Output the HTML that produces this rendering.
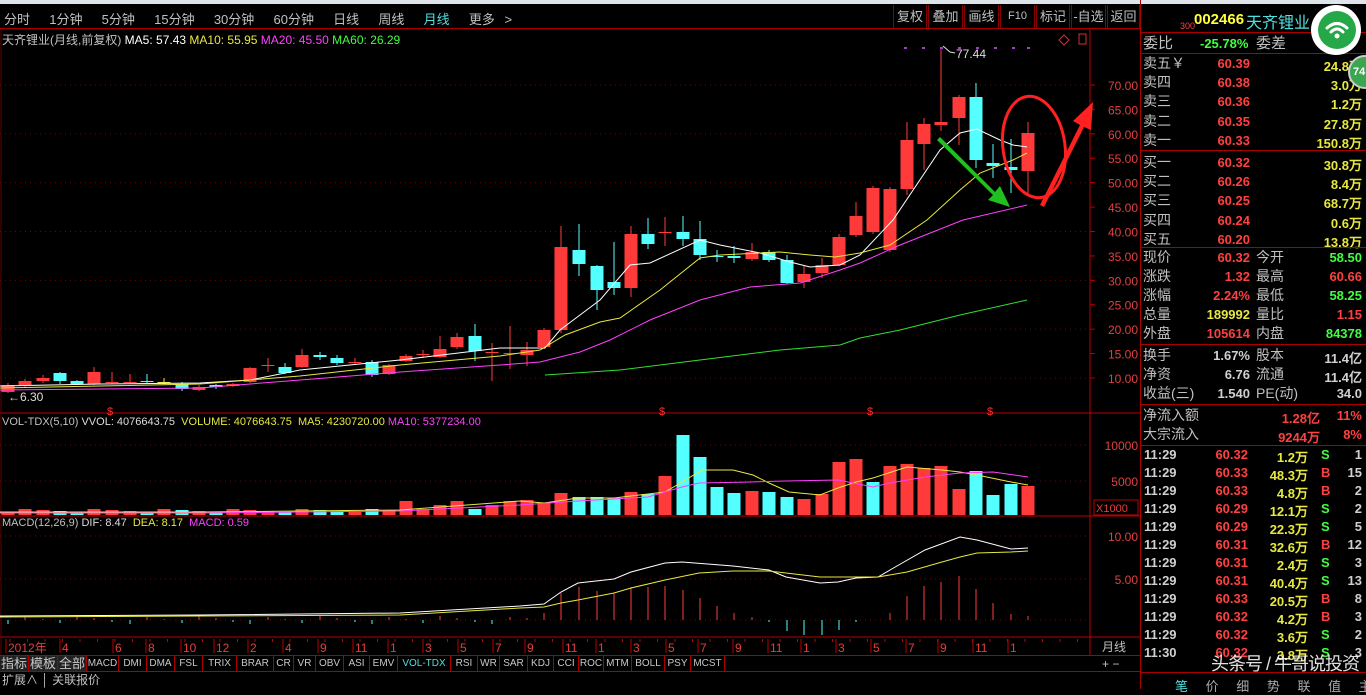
<!DOCTYPE html>
<html><head><meta charset="utf-8"><style>
*{margin:0;padding:0;box-sizing:border-box}
body{width:1366px;height:689px;background:#000;overflow:hidden;position:relative;font-family:"Liberation Sans","Noto Sans CJK SC",sans-serif;color:#c0c0c0}
.a{position:absolute;white-space:nowrap}
.t{font-size:13px}
.rp{font-size:14px;line-height:19px}
.r{color:#ff4040}.g{color:#40ff40}.y{color:#e8e840}.c{color:#50e0e0}.w{color:#d0d0d0}.m{color:#ff40ff}
.tab{position:absolute;top:5px;height:23px;border-left:1px solid #800;border-right:1px solid #800;font-size:13px;color:#c0c0c0;text-align:center;line-height:23px}
.num{font-family:"Liberation Sans",sans-serif;font-weight:bold;font-size:13px}
</style></head><body>
<div class="a" style="left:0;top:0;width:1366px;height:4px;background:#dfe3ea"></div>
<div class="a t" style="left:4px;top:9px;font-size:13px;word-spacing:6px">分时 &nbsp;1分钟 &nbsp;5分钟 &nbsp;15分钟 &nbsp;30分钟 &nbsp;60分钟 &nbsp;日线 &nbsp;周线 &nbsp;<span class="c">月线</span> &nbsp;更多 &gt;</div>
<div class="tab" style="left:893px;width:34px">复权</div>
<div class="tab" style="left:928px;width:35px">叠加</div>
<div class="tab" style="left:964px;width:35px">画线</div>
<div class="tab" style="left:1000px;width:35px;font-size:11px">F10</div>
<div class="tab" style="left:1036px;width:34px">标记</div>
<div class="tab" style="left:1071px;width:35px">-自选</div>
<div class="tab" style="left:1107px;width:33px">返回</div>
<div class="a" style="left:0;top:28px;width:1140px;height:1px;background:#a00"></div>
<div class="a t" style="left:2px;top:31px;font-size:12px">天齐锂业(月线,前复权) <span style="color:#fff">MA5: 57.43</span> <span class="y">MA10: 55.95</span> <span class="m">MA20: 45.50</span> <span class="g">MA60: 26.29</span></div>

<svg class="a" style="left:0;top:0" width="1140" height="689" id="ch"></svg>

<div class="a" style="left:2px;top:416px;font-size:11px">VOL-TDX(5,10) <span style="color:#ddd">VVOL: 4076643.75</span> &nbsp;<span class="y">VOLUME: 4076643.75 &nbsp;MA5: 4230720.00</span> <span class="m">MA10: 5377234.00</span></div>
<div class="a" style="left:2px;top:517px;font-size:11px">MACD(12,26,9) <span style="color:#ddd">DIF: 8.47</span> &nbsp;<span class="y">DEA: 8.17</span> &nbsp;<span class="m">MACD: 0.59</span></div>

<div class="a" style="left:1140px;top:0;width:226px;height:689px;border-left:1px solid #a00"></div>
<div class="a" style="left:1180px;top:21px;font-size:9px;color:#f44">300</div>
<div class="a num" style="left:1194px;top:11px;font-size:15px;color:#ffff40">002466</div>
<div class="a c" style="left:1246px;top:9px;font-size:16px">天齐锂业</div>
<div class="a" style="left:1141px;top:32px;width:225px;height:1px;background:#a00"></div>
<div class="a rp" style="left:1143px;top:34px;font-size:15px">委比</div>
<div class="a num g" style="left:1200px;top:36px">-25.78%</div>
<div class="a rp" style="left:1256px;top:34px;font-size:15px">委差</div>
<div class="a" style="left:1141px;top:53px;width:225px;height:1px;background:#a00"></div>
<div id="book"></div>
<div class="a" style="left:1141px;top:150px;width:225px;height:1px;background:#a00"></div>
<div class="a" style="left:1141px;top:247px;width:225px;height:1px;background:#a00"></div>
<div class="a" style="left:1141px;top:344px;width:225px;height:1px;background:#a00"></div>
<div class="a" style="left:1141px;top:404px;width:225px;height:1px;background:#a00"></div>
<div class="a" style="left:1141px;top:445px;width:225px;height:1px;background:#a00"></div>
<div class="a" style="left:1141px;top:672px;width:225px;height:1px;background:#a00"></div>
<div class="a" style="left:1175px;top:676px;width:191px;font-size:13px;color:#aaa;word-spacing:14px"><span class="c">笔</span> 价 细 势 联 值 主 筹</div>

<div class="a" style="left:1311px;top:5px;width:50px;height:50px;border-radius:25px;background:#fff"></div>
<div class="a" style="left:1318px;top:11px;width:38px;height:38px;border-radius:19px;background:#25a848"></div>
<svg class="a" style="left:1318px;top:11px" width="38" height="38"><g fill="none" stroke="#fff" stroke-width="3" stroke-linecap="round"><path d="M9 17 Q19 8 29 17"/><path d="M13 21 Q19 15 25 21"/></g><circle cx="19" cy="25" r="2.5" fill="#fff"/></svg>
<div class="a" style="left:1348px;top:55px;width:34px;height:34px;border-radius:17px;background:#3aa650;border:2px solid #ccc;color:#fff;font-size:11px;font-weight:bold;line-height:30px;padding-left:3px">74</div>
<div class="a" style="left:1211px;top:650px;font-size:18px;letter-spacing:-1px;color:rgba(255,255,255,0.88)">头条号 / 牛哥说投资</div>

<div class="a" style="left:0;top:655px;width:1140px;height:1px;background:#a00"></div>
<div class="a" style="left:0;top:671px;width:1140px;height:1px;background:#a00"></div>
<div class="a" style="left:2px;top:672px;font-size:12px;line-height:17px">扩展∧ │ 关联报价</div>
<div id="itabs"></div>
<div class="a" style="left:1102px;top:657px;font-size:12px">+ −</div>
<div class="a" style="left:1102px;top:638px;font-size:12px">月线</div>

<script>
var s='';
function L(x1,y1,x2,y2,c,w,d){s+='<line x1="'+x1+'" y1="'+y1+'" x2="'+x2+'" y2="'+y2+'" stroke="'+c+'" stroke-width="'+(w||1)+'"'+(d?' stroke-dasharray="'+d+'"':'')+'/>';}
function R(x,y,w,h,c){s+='<rect x="'+x+'" y="'+y+'" width="'+w+'" height="'+Math.max(h,1)+'" fill="'+c+'"/>';}
function T(x,y,t,c,sz,a){s+='<text x="'+x+'" y="'+y+'" fill="'+c+'" font-size="'+(sz||12)+'" font-family="Liberation Sans,sans-serif"'+(a?' text-anchor="'+a+'"':'')+'>'+t+'</text>';}
function P(pts,c,w){s+='<polyline fill="none" stroke="'+c+'" stroke-width="'+(w||1)+'" points="'+pts+'"/>';}
L(1090,29,1090,655,'#b00');L(0,413,1140,413,'#b00');L(0,516,1140,516,'#b00');L(0,637,1140,637,'#b00');
L(1,29,1,655,'#600');
for(var p=10;p<=70;p+=10){var y=85+(70-p)*4.883;L(0,y,1088,y,'#700',1,'1 4');}
for(var p=10;p<=70;p+=5){var y=85+(70-p)*4.883;T(1138,y+5,p.toFixed(2),'#e04040',12,'end');L(1090,y,1095,y,'#b00');}
L(0,445,1088,445,'#700',1,'1 4');L(0,481,1088,481,'#700',1,'1 4');
T(1138,450,'10000','#e04040',12,'end');T(1138,486,'5000','#e04040',12,'end');
s+='<rect x="1094" y="500" width="44" height="15" fill="none" stroke="#b00"/>';T(1096,512,'X1000','#e04040',11);
L(0,536,1088,536,'#700',1,'1 4');L(0,579,1088,579,'#700',1,'1 4');L(0,620,1088,620,'#700',1,'1 4');
T(1138,541,'10.00','#e04040',12,'end');T(1138,584,'5.00','#e04040',12,'end');
var C=[[8,385,392,383,393,'r'],[25,381,385,379,387,'r'],[43,378,381,375,383,'r'],[60,373,381,372,384,'c'],[77,381,384,380,385,'c'],[94,372,384,367,385,'r'],[112,382,383,372,384,'r'],[130,382,383,374,384,'r'],[147,381,382,374,383,'c'],[164,382,383,378,384,'y'],[182,384,389,382,391,'c'],[199,387,390,385,391,'r'],[216,385,387,384,389,'c'],[233,384,386,383,387,'r'],[250,368,382,367,383,'r'],[268,365,366,358,372,'r'],[285,367,373,363,374,'c'],[302,355,367,349,368,'r'],[320,355,357,352,360,'c'],[337,358,363,355,365,'c'],[355,362,363,358,364,'r'],[372,362,375,360,377,'c'],[389,365,374,364,375,'r'],[406,356,361,354,362,'r'],[423,354,355,350,358,'r'],[440,349,357,336,358,'r'],[457,337,347,333,349,'r'],[475,336,351,324,361,'c'],[492,352,353,343,381,'r'],[510,353,354,326,369,'r'],[527,350,355,342,366,'r'],[544,330,347,328,349,'r'],[561,247,330,226,333,'r'],[579,250,264,224,276,'c'],[597,266,290,265,310,'c'],[614,282,288,242,295,'c'],[631,234,288,226,297,'r'],[648,234,244,218,249,'c'],[665,232,233,217,246,'r'],[683,232,239,216,246,'c'],[700,239,255,221,260,'c'],[717,256,257,250,262,'c'],[734,256,258,246,263,'c'],[752,252,259,243,261,'r'],[769,252,260,250,262,'c'],[787,260,283,255,284,'c'],[804,274,282,266,288,'r'],[822,265,273,258,278,'r'],[839,237,265,234,266,'r'],[856,216,235,202,237,'r'],[873,188,232,186,234,'r'],[890,189,250,187,252,'r'],[907,140,189,122,195,'r'],[924,124,144,118,170,'r'],[941,122,125,48,131,'r'],[959,97,118,95,145,'r'],[976,97,160,83,168,'c'],[993,163,166,144,178,'c'],[1011,167,170,139,193,'c'],[1028,133,171,122,195,'r']];
var col={r:'#ff3a3a',c:'#54ffff',y:'#e8e840'};
C.forEach(function(k){var c=col[k[5]];L(k[0],k[3],k[0],k[4],c);R(k[0]-6.5,k[1],13,k[2]-k[1],c);});
P('0,386 100,384 200,383 250,380 300,370 400,360 500,348 545,348 560,330 600,300 630,265 650,263 700,240 720,245 760,253 790,262 810,267 840,265 860,255 893,220 940,150 960,133 977,129 1000,140 1013,145 1027,147','#fff');
P('0,388 100,386 200,384 300,376 400,365 500,356 540,350 565,335 600,322 620,318 660,290 700,258 720,255 780,252 810,255 835,257 860,253 890,245 927,220 960,190 980,173 1013,160 1027,153','#e8e840');
P('0,390 100,389 200,388 300,380 400,372 500,365 540,362 580,352 610,340 650,320 700,300 750,287 800,283 840,270 860,263 900,245 963,220 1027,205','#ff40ff');
P('545,375 620,370 700,360 780,350 840,345 860,338 900,330 960,315 1027,300','#30e030');
[905,923,941,959,977,995,1013,1028].forEach(function(x){R(x-1,47,3,2,'#a040c0');});
P('943,46 950,52 955,53','#ddd');T(956,58,'77.44','#ddd',12);
T(8,401,'←6.30','#ddd',12);
[110,662,870,990].forEach(function(x){T(x,415,'$','#ff3030',11,'middle');});
s+='<path d="M1064 35 l5 5 -5 5 -5 -5z" fill="none" stroke="#d03030"/><rect x="1079" y="34" width="7" height="10" fill="none" stroke="#d03030"/>';
var V=[];C.forEach(function(k,i){var h;if(k[0]<400)h=3+((i*7)%4);else if(k[0]<520)h=6+(i%3)*4;else h=null;V.push([k[0],h,k[5]]);});
var VT={527:500,544:503,561:493,579:497,597:497,614:498,631:492,648:494,665:476,683:435,700:457,717:487,734:493,752:491,769:492,787:497,804:499,822:494,839:462,856:459,873:482,890:466,907:464,924:468,941:466,959:489,976:471,993:495,1011:484,1028:486};
var VC={873:'c',717:'c',734:'c',752:'r',769:'c',787:'c',804:'r',959:'r',976:'c',993:'c',1011:'c'};
C.forEach(function(k,i){var x=k[0],top;if(VT[x])top=VT[x];else top=515-V[i][1];var c=VC[x]||k[5];if(c=='y')c='r';R(x-6.5,top,13,515-top,col[c]);});
P('0,512 200,512 400,510 520,501 544,503 578,498 614,498 648,494 665,492 682,482 702,470 733,470 753,475 769,483 789,492 820,495 838,488 856,482 873,478 907,467 942,470 960,472 977,475 1011,482 1028,485','#e8e840');
P('0,513 200,513 400,511 520,505 578,501 648,497 682,487 699,483 751,482 786,481 838,480 873,487 890,483 925,477 960,473 993,472 1028,477','#ff40ff');
C.forEach(function(k,i){var x=k[0];if(x<520){var h=((i*5)%7)-2;if(h>0)L(x,620,x,620-h,'#ff3a3a');else L(x,620,x,622-h,'#54ffff');}});
var MH={527:618,544:613,561:593,579:587,597:591,614:593,631:587,648:587,665:586,683:590,700:598,717:606,734:613,752:617,890:613,907:596,924:586,941:582,959:576,976:589,993:603,1011:614,1028:616};
for(var x in MH)L(x,620,x,MH[x],'#ff3a3a');
[[769,622],[787,631],[804,635],[822,635],[839,630],[856,622]].forEach(function(a){L(a[0],620,a[0],a[1],'#54ffff');});
P('0,616 200,615 400,613 520,606 544,604 561,592 578,583 614,579 631,572 665,563 682,562 733,566 769,570 786,577 820,583 838,582 856,578 878,577 890,570 925,550 960,537 977,540 1011,549 1028,548','#fff');
P('0,617 200,616 400,615 520,608 544,607 561,603 578,600 614,593 631,588 665,580 699,573 733,571 769,571 786,573 820,577 856,577 878,577 907,572 942,562 960,557 977,553 1011,552 1028,551','#e8e840');
var D=[[8,'2012年'],[62,'4'],[115,'6'],[148,'8'],[183,'10'],[216,'12'],[250,'2'],[285,'4'],[320,'9'],[355,'11'],[390,'1'],[425,'3'],[460,'5'],[495,'7'],[527,'9'],[565,'11'],[598,'1'],[633,'3'],[668,'5'],[700,'7'],[735,'9'],[770,'11'],[803,'1'],[838,'3'],[873,'5'],[908,'7'],[940,'9'],[975,'11'],[1010,'1']];
D.forEach(function(d){L(d[0]-2,639,d[0]-2,653,'#b00');T(d[0],652,d[1],'#e04040',12);});
for(var x=10;x<1088;x+=17.5)L(x,639,x,642,'#b00');
s+='<ellipse cx="1034" cy="147" rx="31" ry="51" fill="none" stroke="#ff2020" stroke-width="3" transform="rotate(-8 1034 147)"/>';
s+='<path d="M1040 205 L1080 125 L1073 121 L1093 102 L1091 130 L1084 127 L1044 207z" fill="#ff2020"/>';
s+='<path d="M940 137 L995 192 L1000 186 L1010 207 L988 200 L993 195 L937 140z" fill="#20c020"/>';
document.getElementById('ch').innerHTML=s;
var b='';function row(y,l,p,v,vc){b+='<div class="a rp" style="left:1143px;top:'+y+'px;font-size:14px">'+l+'</div><div class="a num r" style="left:1180px;width:70px;text-align:right;top:'+(y+2)+'px">'+p+'</div><div class="a num '+(vc||'y')+'" style="left:1270px;width:92px;text-align:right;top:'+(y+2)+'px">'+v+'</div>';}
var bk=[['卖五￥','60.39','24.8万'],['卖四','60.38','3.0万'],['卖三','60.36','1.2万'],['卖二','60.35','27.8万'],['卖一','60.33','150.8万'],['买一','60.32','30.8万'],['买二','60.26','8.4万'],['买三','60.25','68.7万'],['买四','60.24','0.6万'],['买五','60.20','13.8万']];
bk.forEach(function(r,i){row(54+i*19.2+(i>4?3:0),r[0],r[1],r[2]);});
function q(y,l1,v1,c1,l2,v2,c2){b+='<div class="a rp" style="left:1143px;top:'+y+'px;font-size:14px">'+l1+'</div><div class="a num '+c1+'" style="left:1180px;width:70px;text-align:right;top:'+(y+2)+'px">'+v1+'</div><div class="a rp" style="left:1256px;top:'+y+'px;font-size:14px">'+l2+'</div><div class="a num '+c2+'" style="left:1300px;width:62px;text-align:right;top:'+(y+2)+'px">'+v2+'</div>';}
q(248,'现价','60.32','r','今开','58.50','g');q(267,'涨跌','1.32','r','最高','60.66','r');q(286,'涨幅','2.24%','r','最低','58.25','g');q(305,'总量','189992','y','量比','1.15','r');q(324,'外盘','105614','r','内盘','84378','g');
q(346,'换手','1.67%','w','股本','11.4亿','w');q(365,'净资','6.76','w','流通','11.4亿','w');q(384,'收益(三)','1.540','w','PE(动)','34.0','w');
b+='<div class="a rp" style="left:1143px;top:406px;font-size:14px">净流入额</div><div class="a num r" style="left:1250px;width:70px;text-align:right;top:408px">1.28亿</div><div class="a num r" style="left:1330px;width:32px;text-align:right;top:408px">11%</div>';
b+='<div class="a rp" style="left:1143px;top:425px;font-size:14px">大宗流入</div><div class="a num r" style="left:1250px;width:70px;text-align:right;top:427px">9244万</div><div class="a num r" style="left:1330px;width:32px;text-align:right;top:427px">8%</div>';
var tk=[['60.32','1.2万','S','1'],['60.33','48.3万','B','15'],['60.33','4.8万','B','2'],['60.29','12.1万','S','2'],['60.29','22.3万','S','5'],['60.31','32.6万','B','12'],['60.31','2.4万','S','3'],['60.31','40.4万','S','13'],['60.33','20.5万','B','8'],['60.32','4.2万','B','3'],['60.32','3.6万','S','2'],['60.32','3.8万','S','3']];
tk.forEach(function(r,i){var y=447+i*18;var tm=i==11?'11:30':'11:29';b+='<div class="a num w" style="left:1144px;top:'+y+'px">'+tm+'</div><div class="a num r" style="left:1190px;width:58px;text-align:right;top:'+y+'px">'+r[0]+'</div><div class="a num y" style="left:1250px;width:58px;text-align:right;top:'+y+'px">'+r[1]+'</div><div class="a num '+(r[2]=='S'?'g':'r')+'" style="left:1321px;top:'+y+'px">'+r[2]+'</div><div class="a num w" style="left:1340px;width:22px;text-align:right;top:'+y+'px">'+r[3]+'</div>';});
document.getElementById('book').innerHTML=b;
var it=['指标','模板','全部','MACD','DMI','DMA','FSL','TRIX','BRAR','CR','VR','OBV','ASI','EMV','VOL-TDX','RSI','WR','SAR','KDJ','CCI','ROC','MTM','BOLL','PSY','MCST'];
var w=[29,29,29,32,28,28,28,34,37,20,22,28,26,28,53,27,22,28,26,25,25,28,33,26,34];
var h='',x=0;it.forEach(function(t,i){var cj=i<3;h+='<div class="a" style="left:'+x+'px;top:656px;width:'+w[i]+'px;height:15px;border-right:1px solid #a00;text-align:center;font-size:'+(cj?13:10)+'px;line-height:15px;color:'+(t=='VOL-TDX'?'#50e0e0':'#c8c8c8')+';'+(cj?'background:#222;':'')+'">'+t+'</div>';x+=w[i];});
document.getElementById('itabs').innerHTML=h;
</script>
</body></html>
